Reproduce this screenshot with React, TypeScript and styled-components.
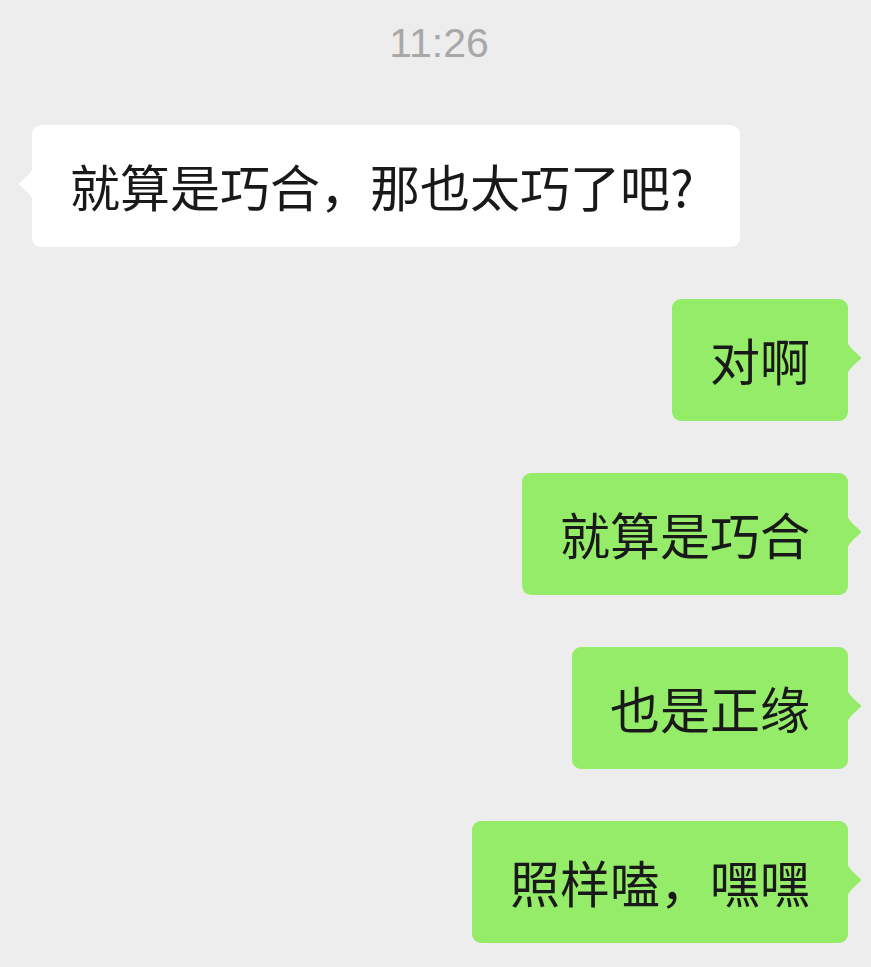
import styled, { createGlobalStyle } from 'styled-components';

const GlobalStyle = createGlobalStyle`
  html, body {
    margin: 0;
    padding: 0;
    background: #ededed;
  }
  body {
    font-family: "Noto Sans CJK SC", "Noto Sans", sans-serif;
  }
`;

type Side = 'left' | 'right';

interface Message {
  id: number;
  side: Side;
  text: string;
}

const messages: Message[] = [
  { id: 1, side: 'left', text: '就算是巧合，那也太巧了吧?' },
  { id: 2, side: 'right', text: '对啊' },
  { id: 3, side: 'right', text: '就算是巧合' },
  { id: 4, side: 'right', text: '也是正缘' },
  { id: 5, side: 'right', text: '照样嗑，嘿嘿' },
];

const Tail = ({ side, color }: { side: Side; color: string }) => (
  <TailSvg $side={side} width="15" height="32" viewBox="0 0 15 32">
    <path
      d="M0 0 Q2 4 6 8 L13.6 15 Q14.6 16 13.6 17 L6 24 Q2 28 0 32 Z"
      fill={color}
    />
  </TailSvg>
);

const App = () => {
  return (
    <>
      <GlobalStyle />
      <Screen>
        <TimeStamp>11:26</TimeStamp>
        <Thread>
          {messages.map((m) => (
            <Row key={m.id} $side={m.side}>
              <Bubble $side={m.side}>
                {m.text}
                <Tail side={m.side} color={m.side === 'left' ? '#ffffff' : '#95ec69'} />
              </Bubble>
            </Row>
          ))}
        </Thread>
      </Screen>
    </>
  );
};

export default App;

const Screen = styled.div`
  width: 871px;
  min-height: 967px;
  box-sizing: border-box;
  padding: 20px 23px 0 32px;
  background: #ededed;
`;

const TimeStamp = styled.div`
  height: 46px;
  line-height: 46px;
  text-align: center;
  font-family: "Liberation Sans", Arial, sans-serif;
  font-size: 41px;
  color: #a8a8a8;
  padding-right: 2px;
`;

const Thread = styled.div`
  display: flex;
  flex-direction: column;
  gap: 52px;
  margin-top: 59px;
`;

const Row = styled.div<{ $side: Side }>`
  display: flex;
  justify-content: ${(p) => (p.$side === 'left' ? 'flex-start' : 'flex-end')};
`;

const Bubble = styled.div<{ $side: Side }>`
  position: relative;
  height: 122px;
  line-height: 120px;
  padding: ${(p) => (p.$side === 'left' ? '0 46px 0 38px' : '0 38px')};
  border-radius: 9px;
  font-size: 50px;
  color: #191919;
  white-space: nowrap;
  background: ${(p) => (p.$side === 'left' ? '#ffffff' : '#95ec69')};
`;

const TailSvg = styled.svg<{ $side: Side }>`
  position: absolute;
  top: 43px;
  ${(p) => (p.$side === 'left' ? 'left: -14px; transform: scaleX(-1);' : 'right: -14px;')}
  display: block;
`;
